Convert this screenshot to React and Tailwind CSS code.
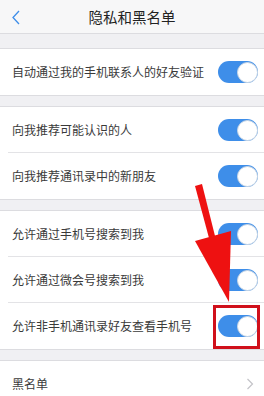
import React from 'react';

const font = { fontFamily: '"PingFang SC", "Noto Sans CJK SC", "Noto Sans", sans-serif' };

const Toggle = () => (
  <div className="w-[40px] h-[22px] rounded-full bg-[#3e8ee9] flex items-center justify-end">
    <div className="w-[21px] h-[21px] rounded-full bg-white border border-[#c9d6e4]" />
  </div>
);

const Row = ({ label, toggle = true, sep = false }) => (
  <div className="relative h-[46px] flex items-center justify-between pl-[12px] pr-[6px]">
    <span className="text-[12px] text-[#3a3a3a]">{label}</span>
    {toggle ? (
      <Toggle />
    ) : (
      <svg width="8" height="12" viewBox="0 0 8 12" className="mr-[4px]">
        <path d="M1.5 1 L6.5 6 L1.5 11" fill="none" stroke="#c3c3c8" strokeWidth="1.2" />
      </svg>
    )}
    {sep && <div className="absolute bottom-0 left-[8px] right-0 h-px bg-[#e3e3e6]" />}
  </div>
);

const Group = ({ children }) => (
  <div className="bg-white border-y border-[#dcdce0]">{children}</div>
);

export default function App() {
  return (
    <div className="relative w-[264px] h-[396px] overflow-hidden bg-[#f0f0f3]" style={font}>
      <div className="h-[34px] bg-[#f7f7f8] border-b border-[#dcdce0] flex items-center relative">
        <svg width="8" height="15" viewBox="0 0 8 15" className="absolute left-[12px] top-[10px]">
          <path d="M7 1 L1 7.5 L7 14" fill="none" stroke="#3e8ee9" strokeWidth="1.3" />
        </svg>
        <div className="w-full text-center text-[14.5px] text-[#222]">隐私和黑名单</div>
      </div>
      <div className="h-[14px]" />
      <Group>
        <Row label="自动通过我的手机联系人的好友验证" />
      </Group>
      <div className="h-[10px]" />
      <Group>
        <Row label="向我推荐可能认识的人" sep />
        <Row label="向我推荐通讯录中的新朋友" />
      </Group>
      <div className="h-[10px]" />
      <Group>
        <Row label="允许通过手机号搜索到我" sep />
        <Row label="允许通过微会号搜索到我" sep />
        <Row label="允许非手机通讯录好友查看手机号" />
      </Group>
      <div className="h-[10px]" />
      <Group>
        <Row label="黑名单" toggle={false} />
      </Group>

      {/* annotation overlay */}
      <div className="absolute left-[213px] top-[305px] w-[47px] h-[44px] border-[3px] border-[#d0101b]" />
      <svg className="absolute left-0 top-0" width="264" height="396" viewBox="0 0 264 396">
        <polygon points="195,186 202,184 215,236 209,238" fill="#ee1111" />
        <polygon points="195,241 231,231 229,302" fill="#ee1111" />
      </svg>
    </div>
  );
}
